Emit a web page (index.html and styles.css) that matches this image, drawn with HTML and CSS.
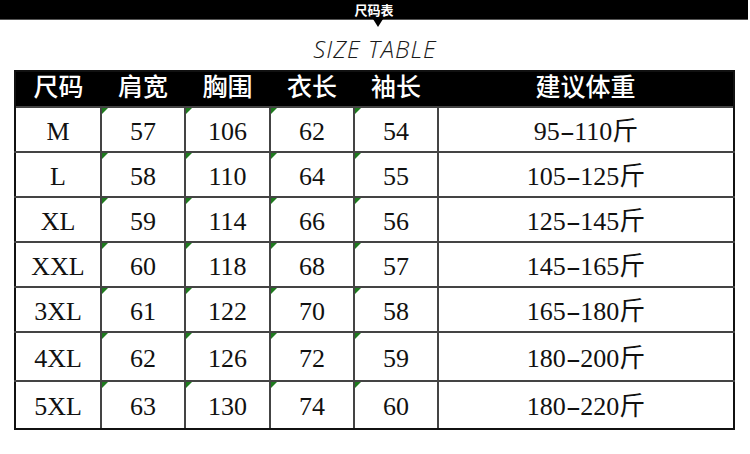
FILE: index.html
```html
<!DOCTYPE html>
<html lang="zh-CN">
<head>
<meta charset="utf-8">
<title>尺码表</title>
<link rel="stylesheet" href="styles.css">
</head>
<body>
<div class="topbar"><span class="topbar-text">尺码表</span></div>
<h1 class="title">SIZE TABLE</h1>
<table class="size-table">
  <colgroup>
    <col class="c1"><col class="c2"><col class="c3"><col class="c4"><col class="c5"><col class="c6">
  </colgroup>
  <thead>
    <tr><th>尺码</th><th>肩宽</th><th>胸围</th><th>衣长</th><th>袖长</th><th>建议体重</th></tr>
  </thead>
  <tbody>
    <tr class="r45"><td>M</td><td class="m">57</td><td class="m">106</td><td class="m">62</td><td class="m">54</td><td>95<span class="dash">-</span>110斤</td></tr>
    <tr class="r45"><td>L</td><td class="m">58</td><td class="m">110</td><td class="m">64</td><td class="m">55</td><td>105<span class="dash">-</span>125斤</td></tr>
    <tr class="r45"><td>XL</td><td class="m">59</td><td class="m">114</td><td class="m">66</td><td class="m">56</td><td>125<span class="dash">-</span>145斤</td></tr>
    <tr class="r45"><td>XXL</td><td class="m">60</td><td class="m">118</td><td class="m">68</td><td class="m">57</td><td>145<span class="dash">-</span>165斤</td></tr>
    <tr class="r45"><td>3XL</td><td class="m">61</td><td class="m">122</td><td class="m">70</td><td class="m">58</td><td>165<span class="dash">-</span>180斤</td></tr>
    <tr class="r49"><td>4XL</td><td class="m">62</td><td class="m">126</td><td class="m">72</td><td class="m">59</td><td>180<span class="dash">-</span>200斤</td></tr>
    <tr class="r48"><td>5XL</td><td class="m">63</td><td class="m">130</td><td class="m">74</td><td class="m">60</td><td>180<span class="dash">-</span>220斤</td></tr>
  </tbody>
</table>
</body>
</html>
```
FILE: styles.css
```css
html, body {
  margin: 0;
  padding: 0;
  background: #ffffff;
}

body {
  width: 750px;
  height: 454px;
  overflow: hidden;
}

.topbar {
  position: relative;
  width: 748px;
  height: 20px;
  background: #000;
  display: flex;
  align-items: center;
  justify-content: center;
  border-bottom: 1px solid #555;
  box-sizing: border-box;
}

.topbar::after {
  content: "";
  position: absolute;
  left: 373px;
  top: 19px;
  border-left: 5px solid transparent;
  border-right: 5px solid transparent;
  border-top: 8px solid #000;
}

.topbar-text {
  color: #fff;
  font-family: "Noto Sans CJK SC", sans-serif;
  font-weight: 700;
  font-size: 13px;
  line-height: 20px;
}

.title {
  margin: 0;
  padding-top: 15px;
  height: 35px;
  text-align: center;
  font-family: "Open Sans", sans-serif;
  font-style: italic;
  font-weight: 300;
  font-size: 24px;
  line-height: 28px;
  letter-spacing: 1px;
  color: #1a1a1a;
}

.size-table {
  margin-left: 14px;
  width: 719px;
  border-collapse: collapse;
  table-layout: fixed;
  border: 2px solid #111;
}

.c1 { width: 86px; }
.c2 { width: 84px; }
.c3 { width: 85px; }
.c4 { width: 84px; }
.c5 { width: 84px; }
.c6 { width: 296px; }

.size-table th {
  background: #000;
  color: #fff;
  height: 34px;
  padding: 0 0 8px;
  box-sizing: border-box;
  font-family: "Noto Sans CJK SC", sans-serif;
  font-weight: 500;
  font-size: 25px;
  line-height: 26px;
  text-align: center;
  vertical-align: middle;
  border: none;
}

.size-table td {
  position: relative;
  border: 2px solid #444;
  padding: 4px 0 0;
  text-align: center;
  vertical-align: middle;
  font-family: "Liberation Serif", "Noto Sans CJK SC", serif;
  font-size: 26px;
  line-height: 30px;
  color: #111;
}

.size-table td:first-child { border-left-color: #111; }
.size-table td:last-child { border-right-color: #111; }
.size-table tr:last-child td { border-bottom-color: #111; }

.r45 { height: 45px; }
.r49 { height: 49px; }
.r48 { height: 48px; }

.m::before {
  content: "";
  position: absolute;
  left: 0;
  top: 0;
  border-top: 6px solid #1e7a1e;
  border-right: 6px solid transparent;
}

.dash {
  display: inline-block;
  transform: scaleX(1.7);
  margin: 0 3px;
}
```
